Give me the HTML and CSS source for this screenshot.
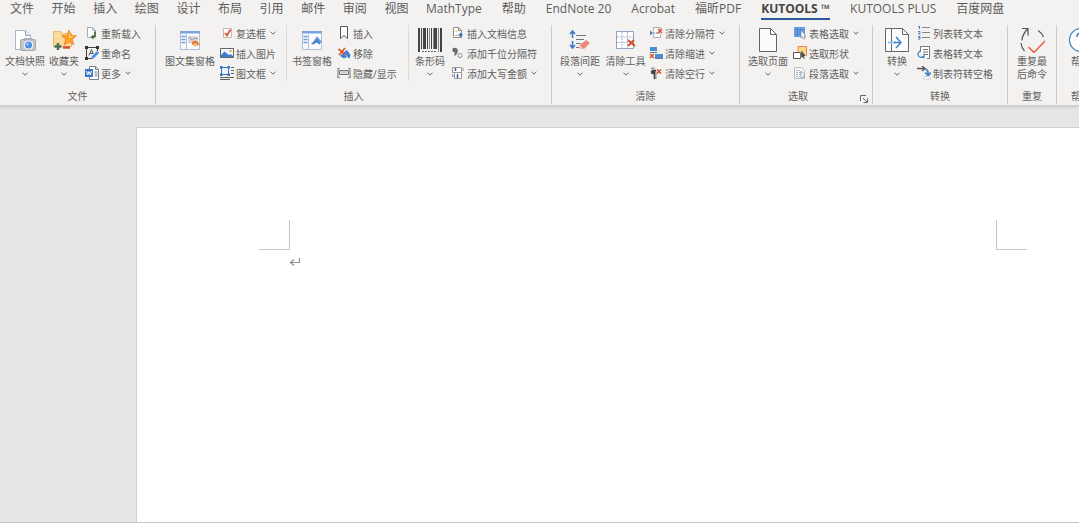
FILE: index.html
```html
<!DOCTYPE html>
<html lang="zh-CN">
<head>
<meta charset="utf-8">
<meta name="viewport" content="width=device-width, initial-scale=1">
<title>KUTOOLS</title>
<link rel="stylesheet" href="styles.css">
</head>
<body>
<svg class="defs" aria-hidden="true">
  <symbol id="chev" viewBox="0 0 6 6"><path d="M.6 1.7 3 4.2 5.4 1.7" fill="none" stroke="#666" stroke-width="1"/></symbol>
</svg>
<header class="ribbon">
  <nav class="tabs">
    <div class="tabs-main">
      <a href="#">文件</a><a href="#">开始</a><a href="#">插入</a><a href="#">绘图</a><a href="#">设计</a><a href="#">布局</a><a href="#">引用</a><a href="#">邮件</a><a href="#">审阅</a><a href="#">视图</a>
    </div>
    <div class="tabs-more">
      <a href="#">MathType</a><a href="#">帮助</a><a href="#">EndNote 20</a><a href="#">Acrobat</a><a href="#">福昕PDF</a><a href="#" class="active" aria-current="page">KUTOOLS ™</a><a href="#">KUTOOLS PLUS</a><a href="#">百度网盘</a>
    </div>
  </nav>

  <div class="groups">
    <section class="group g-file">
      <div class="tools">
        <button class="big" type="button">
          <svg class="ico" viewBox="0 0 26 26"><path d="M3.500 3.500h10l5 5v14h-15z" fill="#fff" stroke="#a5b6c8"/><path d="M13.500 3.500v5h5" fill="#e8eef5" stroke="#8fa5bd"/><rect x="8.500" y="12.500" width="15" height="11" rx="1" fill="#c6c6c6" stroke="#a4a4a4"/><rect x="12" y="11" width="8" height="3" fill="#b0b0b0"/><circle cx="16.500" cy="18" r="4.800" fill="#e9f1fb"/><circle cx="16.500" cy="18" r="3.500" fill="#4d8fe0"/><circle cx="15.500" cy="17" r="1.500" fill="#9cc5f5"/></svg>
          <span>文档快照</span><svg class="chev"><use href="#chev"/></svg>
        </button>
        <button class="big" type="button">
          <svg class="ico" viewBox="0 0 26 26"><path d="M2.500 4.500h7l2 2h9v13h-18z" fill="#fbd99a" stroke="#ebb873"/><path d="M3 9h17" stroke="#fff0c4"/><path d="m18 3 2.200 5.500 5.300.2-4.200 3.700 1.500 5.600-4.800-3.200-4.800 3.200 1.500-5.600-4.200-3.700 5.500-.2z" fill="#ffa126" stroke="#e97825" stroke-width=".7"/><path d="m18 5 1 4 4 .5-5 2z" fill="#ffd475"/><path d="M7 16v7M3.500 19.500h7" stroke="#4f7352" stroke-width="2.600"/><path d="M12 20.500h7" stroke="#dc4526" stroke-width="2.400"/></svg>
          <span>收藏夹</span><svg class="chev"><use href="#chev"/></svg>
        </button>
        <div class="stack">
          <button type="button"><svg class="sm" viewBox="0 0 14 14"><path d="M2.500 1.500h5l3 3v7h-8z" fill="#fff" stroke="#9fb0c4"/><path d="M7.500 1.500v3h3" fill="none" stroke="#9fb0c4"/><path d="M10 5.500v3.500q0 2-3 2" fill="none" stroke="#3f5d36" stroke-width="1.600"/><path d="m8.500 8.500-3 2.500 3 2.500z" fill="#3f6c36"/></svg><span>重新载入</span></button>
          <button type="button"><svg class="sm" viewBox="0 0 14 14"><path d="M1.500 1.500h11M1.500 1.500v11h6M12.500 2v3" fill="none" stroke="#444"/><path d="M0 0h3v3H0zM11 0h3v3h-3zM0 11h3v3H0z" fill="#333"/><path d="m4 9.500 2.500-6 1.500 4M5 7.500h3" stroke="#555" fill="none"/><path d="m6 13.500 1-3.500L12 5l2 2-5 5z" fill="#4b8fe0"/></svg><span>重命名</span></button>
          <button type="button"><svg class="sm" viewBox="0 0 14 14"><path d="M4.500.5h6l3 3v10h-9z" fill="#fff" stroke="#77828f"/><path d="M10.500.5v3h3M9.500 6h3M9.500 8h3M9.500 10h3" stroke="#77828f" fill="none"/><path d="M0 3h8v8H0z" fill="#3976c8"/><path d="m1.500 5 1.200 4L4 5.500 5.300 9l1.200-4" fill="none" stroke="#fff"/></svg><span>更多</span><svg class="chev"><use href="#chev"/></svg></button>
        </div>
      </div>
      <h2>文件</h2>
    </section>

    <section class="group g-insert">
      <div class="tools">
        <button class="big" type="button">
          <svg class="ico" viewBox="0 0 26 26"><path d="M3.500 4.500h19v18h-19z" fill="#fafcff" stroke="#a9bfda"/><path d="M3 4h20v2.500H3z" fill="#7ba4de"/><path d="M9.500 7v15.500" stroke="#a9bfda"/><path d="M4.500 9.500h4M4.500 12.500h4M4.500 15.500h4" stroke="#6c9ad9" stroke-width="1.400"/><path d="M11 9h10v7H11z" fill="#d7d7d7"/><path d="m12 10 3 3 3-2 3 1" stroke="#999" fill="none"/><path d="M15 15q4-3 6 0l1.500 2.500-4 2-4-2.500z" fill="#e97a37"/><path d="m17 17 3 1" stroke="#ffe0a0" stroke-width="1.500"/></svg>
          <span>图文集窗格</span>
        </button>
        <div class="stack ruled">
          <button type="button"><svg class="sm" viewBox="0 0 14 14"><path d="M3.500 2.500h8v9h-8z" fill="#fff" stroke="#c3b9b4"/><path d="m5 7 2 2.500 3.500-6" fill="none" stroke="#da4b28" stroke-width="1.700"/></svg><span>复选框</span><svg class="chev"><use href="#chev"/></svg></button>
          <button type="button"><svg class="sm" viewBox="0 0 14 14"><path d="M.5 2.500h13v9H.5z" fill="#f4f9ff" stroke="#656565"/><path d="m1 9 3.500-3.500L9 9l1.500-1L13 10v1H1z" fill="#3d7fce"/><circle cx="10.500" cy="5" r="1.200" fill="#efa650"/></svg><span>插入图片</span></button>
          <button type="button"><svg class="sm" viewBox="0 0 14 14"><path d="M1.500 1.500h7v7h-7z" fill="#edf5ff" stroke="#3675c1"/><path d="M0 0h2.500v2.500H0zM7.500 0H10v2.500H7.500zM0 7.500h2.500V10H0zM7.500 7.500H10V10H7.500z" fill="#3675c1"/><path d="M11 1.500h3M11 4.500h3M11 7.500h3M0 11.500h14M0 13.500h10" stroke="#606060"/></svg><span>图文框</span><svg class="chev"><use href="#chev"/></svg></button>
        </div>
        <button class="big" type="button">
          <svg class="ico" viewBox="0 0 26 26"><path d="M3.500 4.500h19v18h-19z" fill="#fafcff" stroke="#a9bfda"/><path d="M3 4h20v2.500H3z" fill="#7ba4de"/><path d="M9.500 7v15.500" stroke="#a9bfda"/><path d="M4.500 9.500h4M4.500 12.500h4M4.500 15.500h4" stroke="#6c9ad9" stroke-width="1.400"/><path d="m12 17 3-3 3-4.500 4.500 5-2 3-3-2-3 2z" fill="#4a84d3"/><path d="m17 10.500 5 5" stroke="#82afe8"/></svg>
          <span>书签窗格</span>
        </button>
        <div class="stack ruled">
          <button type="button"><svg class="sm" viewBox="0 0 14 14"><path d="M3.500.5h7v12L7 9.500l-3.500 3z" fill="#fff" stroke="#555"/></svg><span>插入</span></button>
          <button type="button"><svg class="sm" viewBox="0 0 14 14"><path d="m3 10 4-4 3-2 3.500 5-1 3.500-3-1.500-2.500 1.500z" fill="#3e7ed2"/><path d="m7 8 4 3" stroke="#9fc5f0"/><path d="m1.500 3 7 5.500M8 2 2 9" stroke="#df5a2d" stroke-width="1.800"/></svg><span>移除</span></button>
          <button type="button"><svg class="sm" viewBox="0 0 14 14"><path d="M1 2.500v9M13 2.500v9" stroke="#777"/><path d="M0 2.500h3M0 11.500h3M11 2.500h3M11 11.500h3" stroke="#999"/><path d="M2.500 4.500h9v4h-9z" fill="#d5d5d5" stroke="#777"/></svg><span>隐藏/显示</span></button>
        </div>
        <button class="big" type="button">
          <svg class="ico" viewBox="0 0 26 26"><path d="M1 1h2v24H1zM4 1h1v21H4zM6 1h3v21H6zM10 1h1v21h-1zM14 1h1v21h-1zM17 1h3v21h-3zM23 1h2v24h-2z" fill="#444"/><path d="M12 1h1v21h-1zM16 1h1v21h-1zM21 1h1v24h-1z" fill="#888"/><path d="M5 24.500h15" stroke="#666" stroke-dasharray="2 1"/></svg>
          <span>条形码</span><svg class="chev"><use href="#chev"/></svg>
        </button>
        <div class="stack">
          <button type="button"><svg class="sm" viewBox="0 0 14 14"><path d="M2.500 1.500h5l3 3v7h-8z" fill="#fff" stroke="#8d8d8d"/><path d="M7.500 1.500v3h3" fill="none" stroke="#8d8d8d"/><path d="M4 5h3M4 9.500h3" stroke="#efb257"/><path d="M9.500 7v4M7.500 9h4" stroke="#316fc0" stroke-width="1.300"/></svg><span>插入文档信息</span></button>
          <button type="button"><svg class="sm" viewBox="0 0 14 14"><path d="M1.500 2.500Q3.500 1 6 2.500q2 3-1 6.500L3 10l1-3.500-2-.5q-1-2-.5-3.500z" fill="#696969"/><circle cx="9" cy="9.500" r="2" fill="#fff" stroke="#888"/></svg><span>添加千位分隔符</span></button>
          <button type="button"><svg class="sm" viewBox="0 0 14 14"><path d="M1.500 1.500h9v5h-9zM3.500 6.500h7v6h-7z" fill="#fff" stroke="#999"/><path d="M4.500 2v3M6.500 8v4" stroke="#315f9f" stroke-width="1.500"/><path d="M1.500 8v2.500H3M12 2v3" stroke="#999" fill="none"/></svg><span>添加大写金额</span><svg class="chev"><use href="#chev"/></svg></button>
        </div>
      </div>
      <h2>插入</h2>
    </section>

    <section class="group g-clear">
      <div class="tools">
        <button class="big" type="button">
          <svg class="ico" viewBox="0 0 26 26"><path d="M5.500 5v6M5.500 14v7M3 7l2.500-3L8 7M3 18l2.500 3L8 18" fill="none" stroke="#3978c9" stroke-width="1.500"/><path d="M9 8.500h10M9 12.500h8M9 16.500h5M9 20.500h4" stroke="#777"/><path d="m13 18 6-5 4 3-6 6h-3l-2-2z" fill="#ea8977"/><path d="m13 18 4 4h-3l-3-2z" fill="#f4beb0"/></svg>
          <span>段落间距</span><svg class="chev"><use href="#chev"/></svg>
        </button>
        <button class="big" type="button">
          <svg class="ico" viewBox="0 0 26 26"><path d="M3.500 4.500h17v17h-17z" fill="#fff" stroke="#8ca4bf"/><path d="M9 5v16M14.500 5v16M4 10h16M4 15.500h16" stroke="#a5b3c3" stroke-dasharray="2 1"/><path d="m15 13 7 6M21 13l-6 6" stroke="#d94d28" stroke-width="1.900"/></svg>
          <span>清除工具</span><svg class="chev"><use href="#chev"/></svg>
        </button>
        <div class="stack">
          <button type="button"><svg class="sm" viewBox="0 0 14 14"><path d="M4.500 5.500v-4h7v4M4.500 8.500v3h7v-3" fill="#fff" stroke="#aaa"/><path d="M4 7h7" stroke="#777" stroke-dasharray="2 1"/><path d="m1 4.500 3 2.500-3 2.500z" fill="#3d7fce"/><path d="m9 3 4 4M13 3 9 7" stroke="#db4a26" stroke-width="1.300"/></svg><span>清除分隔符</span><svg class="chev"><use href="#chev"/></svg></button>
          <button type="button"><svg class="sm" viewBox="0 0 14 14"><path d="M1 1h7v4H1zM6 8h8v4H6z" fill="#4c8cda"/><path d="M1 6.500h7M6 12.500h8" stroke="#667a93"/><path d="m1 8 4 4M5 8l-4 4" stroke="#db4a26" stroke-width="1.300"/></svg><span>清除缩进</span><svg class="chev"><use href="#chev"/></svg></button>
          <button type="button"><svg class="sm" viewBox="0 0 14 14"><path d="M7 4H4a2 2 0 0 0 0 4h1v5h1V5h1v8" fill="#444" stroke="#444" stroke-width=".6"/><path d="M2 2.500h3V1M2 2.500l1-1" fill="none" stroke="#777" stroke-width=".8"/><path d="m8 3.500 4 4M12 3.500l-4 4" stroke="#db4a26" stroke-width="1.400"/></svg><span>清除空行</span><svg class="chev"><use href="#chev"/></svg></button>
        </div>
      </div>
      <h2>清除</h2>
    </section>

    <section class="group g-select">
      <div class="tools">
        <button class="big" type="button">
          <svg class="ico" viewBox="0 0 26 26"><path d="M4.500 1.500h11l6 6v17h-17z" fill="#fbfdfc" stroke="#666"/><path d="M15.500 1.500v6h6" fill="none" stroke="#666"/></svg>
          <span>选取页面</span><svg class="chev"><use href="#chev"/></svg>
        </button>
        <div class="stack">
          <button type="button"><svg class="sm" viewBox="0 0 14 14"><path d="M1 1h11v10H1z" fill="#6ca0e5"/><path d="M1 3.500h11M1 6h11M1 8.500h11M4.500 1v10M8 1v10" stroke="#4d86cf" stroke-width=".8"/><path d="m8 4 5 6-2 .2 1 2-1.500.8-1-2L8 12z" fill="#fff" stroke="#6d7c91" stroke-width=".7"/></svg><span>表格选取</span><svg class="chev"><use href="#chev"/></svg></button>
          <button type="button"><svg class="sm" viewBox="0 0 14 14"><path d="M5 .5h8.500v9H5z" fill="#ffd978" stroke="#ed8062"/><path d="M.5 6.500h7v6h-7z" fill="#fff" stroke="#555"/><path d="m8 4 5 6-2 .2 1 2-1.500.8-1-2L8 12z" fill="#444" stroke="#fff" stroke-width=".4"/></svg><span>选取形状</span></button>
          <button type="button"><svg class="sm" viewBox="0 0 14 14"><path d="M1.500 1.500h7l3 3v8h-10z" fill="#f5f7fa" stroke="#b6bec8"/><path d="M3 4.500h4M3 6.500h6M3 8.500h5M3 10.500h4" stroke="#a6afbb" stroke-dasharray="2 1"/><path d="m8 5 4 5-1.500.2.8 2-1 .5-1-2L8 12z" fill="#fff" stroke="#7e8fa8" stroke-width=".7"/></svg><span>段落选取</span><svg class="chev"><use href="#chev"/></svg></button>
        </div>
      </div>
      <div class="caption"><h2>选取</h2><button class="launch" type="button" aria-label="选取选项"><svg viewBox="0 0 8 8"><path d="M.5 6V.5H6M3 3l4 4M7.500 3.500v4h-4" fill="none" stroke="#666"/></svg></button></div>
    </section>

    <section class="group g-convert">
      <div class="tools">
        <button class="big" type="button">
          <svg class="ico" viewBox="0 0 26 26"><path d="M1.500 1.500h17l6 6v17h-23z" fill="#fbfdfc" stroke="#666"/><path d="M18.500 1.500v6h6M7.500 2v22" fill="none" stroke="#666"/><path d="M4 15.500h8" stroke="#9bc0ee" stroke-width="2"/><path d="M10 15.500h7M12 10l5 5.500-5 5.500" fill="none" stroke="#3f80d2" stroke-width="1.500"/></svg>
          <span>转换</span><svg class="chev"><use href="#chev"/></svg>
        </button>
        <div class="stack">
          <button type="button"><svg class="sm" viewBox="0 0 14 14"><path d="M2.500 0v3M1 .8l1.500-.5M1 5.500h2v1.300L1.300 8H3.500M1 10.500h2v2.500H1M1.500 11.700H3" fill="none" stroke="#3678c8" stroke-width=".9"/><path d="M5 1.500h8M5 6.500h8M5 11.500h8" stroke="#888"/></svg><span>列表转文本</span></button>
          <button type="button"><svg class="sm" viewBox="0 0 14 14"><path d="M3.500 6V.5h9v12H10M6 3.500h5M6 6h5M7 8.500h4" fill="#fff" stroke="#777"/><path d="M3 5Q0 7 1.500 10q2 2.500 5 .5M7 7.500v4H3.500" fill="none" stroke="#3d7fce" stroke-width="1.200"/></svg><span>表格转文本</span></button>
          <button type="button"><svg class="sm" viewBox="0 0 14 14"><path d="M0 2.500h7M5 0l3 2.500L5 5" fill="none" stroke="#555" stroke-width="1.400"/><path d="M8.500 3q3 1 2.500 5M8 6.500l3 3 3-3" fill="none" stroke="#3d7fce" stroke-width="1.700"/><rect x="6.500" y="10.500" width="7" height="2.500" rx="1" fill="#fff" stroke="#c3cbd5"/></svg><span>制表符转空格</span></button>
        </div>
      </div>
      <h2>转换</h2>
    </section>

    <section class="group g-repeat">
      <div class="tools">
        <button class="big" type="button">
          <svg class="ico" viewBox="0 0 26 26"><path d="M3 13.500Q3 8 8.500 2M3 1.500h6v7M2 16q.5 5 3.500 8M19 3.500Q23 6 24.500 10" fill="none" stroke="#555" stroke-width="1.200"/><path d="m9.500 20 5.500 5.500L26 14" fill="none" stroke="#de593c" stroke-width="1.400"/></svg>
          <span>重复最<br>后命令</span>
        </button>
      </div>
      <h2>重复</h2>
    </section>

    <section class="group g-help">
      <div class="tools">
        <button class="big" type="button">
          <svg class="ico" viewBox="0 0 26 26"><circle cx="13" cy="13" r="11.500" fill="#fff" stroke="#3d7fce" stroke-width="1.200"/><path d="M9 10q0-4 4-4t4 4q0 2-2.500 3.500Q13 15 13 17M13 19v2" fill="none" stroke="#3d7fce" stroke-width="1.500"/></svg>
          <span>帮助</span>
        </button>
      </div>
      <h2>帮助</h2>
    </section>
  </div>
</header>

<main class="workspace">
  <article class="page">
    <div class="margins"><span class="corner left"></span><span class="corner right"></span></div>
    <svg class="return" viewBox="0 0 12 10"><path d="M10.500 1v4.500H2M5 2.500l-3.500 3L5 8.500" fill="none" stroke="#929292" stroke-width="1.200"/></svg>
  </article>
</main>
</body>
</html>
```

FILE: styles.css
```css
* { box-sizing: border-box; }

body {
  margin: 0;
  min-height: 100vh;
  display: flex;
  flex-direction: column;
  overflow: hidden;
  background: #e6e6e6;
  color: #606060;
  font-family: "Open Sans", "Noto Sans CJK SC", sans-serif;
}

.defs { display: none; }

.ribbon {
  position: relative;
  background: #f3f2f1;
  padding-bottom: 1px;
  border-bottom: 1px solid #cfcfcf;
  box-shadow: 0 1px 3px #c4c4c4;
}

.tabs {
  display: flex;
  padding-left: 10px;
  font-size: 12px;
  line-height: 18px;
  white-space: nowrap;
}

.tabs a {
  color: #5c5c5c;
  text-decoration: none;
  border-bottom: 2px solid transparent;
}

.tabs-main {
  display: grid;
  grid-template-columns: repeat(10, 1fr);
  width: 416px;
}

.tabs-more { display: flex; gap: 20px; }

.tabs .active {
  color: #444;
  font-weight: 700;
  border-color: #2b579a;
}

.groups {
  display: flex;
  padding-top: 5px;
  overflow: hidden;
}

.group {
  flex: none;
  border-right: 1px solid #cdcccb;
}

.tools { display: grid; height: 56px; }

.g-file { width: 156px; }
.g-file .tools { grid-template-columns: 46px 37px 1fr; padding-left: 2px; }
.g-file .big:nth-child(2) { padding-right: 5px; }
.g-insert { width: 396px; }
.g-insert .tools { grid-template-columns: 60px 67px 50px 72px 42px 1fr; padding-left: 4px; }
.g-clear { width: 188px; }
.g-clear .tools { grid-template-columns: 44px 47px 1fr; padding-left: 6px; }
.g-select { width: 133px; }
.g-select .tools { grid-template-columns: 46px 1fr; column-gap: 2px; padding-left: 5px; }
.g-convert { width: 135px; }
.g-convert .tools { grid-template-columns: 40px 1fr; padding-left: 4px; }
.g-repeat, .g-help { width: 49px; }

button {
  margin: 0;
  padding: 0;
  border: 0;
  background: none;
  color: inherit;
  font-family: inherit;
  font-size: 10px;
  white-space: nowrap;
}

.big {
  display: flex;
  flex-direction: column;
  align-items: center;
  padding-top: 2px;
  line-height: 13px;
}

.big span { padding-top: 2px; }
.big .chev { margin-top: 3px; }

.ico { flex: none; width: 26px; height: 26px; }
.sm { flex: none; width: 14px; height: 14px; }
.chev { flex: none; width: 6px; height: 6px; }

.stack {
  display: flex;
  flex-direction: column;
  gap: 4px;
}

.stack button {
  display: flex;
  align-items: center;
  gap: 2px;
  height: 16px;
}

.stack .chev { margin-left: 2px; }

.ruled { border-right: 1px solid #dddcdb; }

h2 {
  flex: 1;
  margin: 7px 0 0;
  font-size: 10px;
  font-weight: 400;
  line-height: 16px;
  text-align: center;
}

.caption { display: flex; align-items: flex-end; }

.launch { width: 16px; height: 10px; }
.launch svg { display: block; width: 8px; height: 8px; margin: 0 auto; }

.workspace {
  flex: 1;
  display: flex;
  padding: 21px 0 0 136px;
  border-bottom: 1px solid #c4c4c4;
}

.page {
  flex: 1;
  padding: 92px 52px 0 122px;
  background: #fff;
  border: 1px solid #d0d0d0;
  border-width: 1px 0 0 1px;
}

.margins { display: flex; justify-content: space-between; }

.corner {
  width: 31px;
  height: 30px;
  border-bottom: 1px solid #c6c6c6;
}

.left { border-right: 1px solid #c6c6c6; }
.right { border-left: 1px solid #c6c6c6; }

.return {
  display: block;
  width: 12px;
  height: 10px;
  margin: 7px 0 0 30px;
}
```
